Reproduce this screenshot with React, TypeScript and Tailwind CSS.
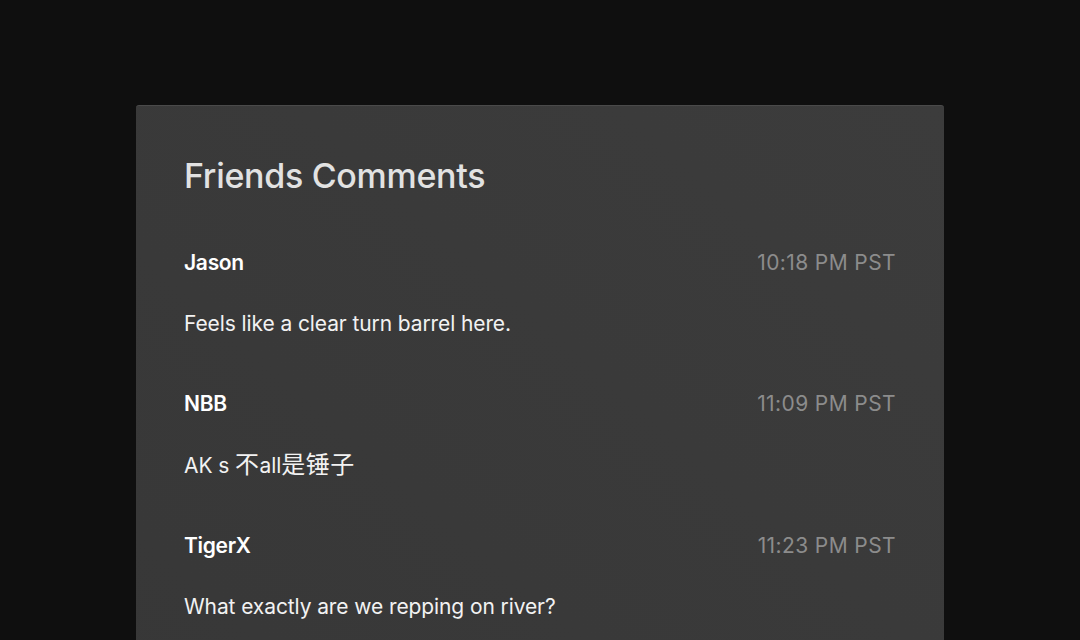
import type { ReactNode } from "react";

const cjk = (s: string) => <span className="text-[24px] tracking-[0.5px]">{s}</span>;

const comments: { name: string; time: string; text: ReactNode }[] = [
  { name: "Jason", time: "10:18 PM PST", text: "Feels like a clear turn barrel here." },
  {
    name: "NBB",
    time: "11:09 PM PST",
    text: (
      <>
        AK s {cjk("不")}all{cjk("是锤子")}
      </>
    ),
  },
  { name: "TigerX", time: "11:23 PM PST", text: "What exactly are we repping on river?" },
  { name: "Mo", time: "11:40 PM PST", text: "Snap call." },
];

export default function App() {
  return (
    <div
      className="h-[640px] overflow-hidden bg-[#0f0f0f] pt-[105px] px-[136px]"
      style={{ fontFamily: 'Inter, "Noto Sans CJK SC", sans-serif' }}
    >
      <div className="rounded-[3px] border-t border-[#4a4a4a] bg-gradient-to-bl from-[#3c3c3c] to-[#373737] px-12 pt-[50px] pb-12">
        {/* Title */}
        <h1 className="text-[34px] leading-[40px] font-medium text-[#e2e2e2] tracking-[-0.3px]">
          Friends Comments
        </h1>

        {/* Comments */}
        <div className="mt-[53px] flex flex-col gap-[52px]">
          {comments.map((c) => (
            <div key={c.name}>
              <div className="flex justify-between items-center text-[21px] leading-[28px]">
                <p className="font-semibold text-white tracking-[-0.3px]">{c.name}</p>
                <p className="text-[#8c8c8c] tracking-[0.4px]">{c.time}</p>
              </div>
              <p className="mt-[33px] text-[21px] leading-[28px] text-[#f2f2f2] tracking-[-0.1px]">
                {c.text}
              </p>
            </div>
          ))}
        </div>
      </div>
    </div>
  );
}
